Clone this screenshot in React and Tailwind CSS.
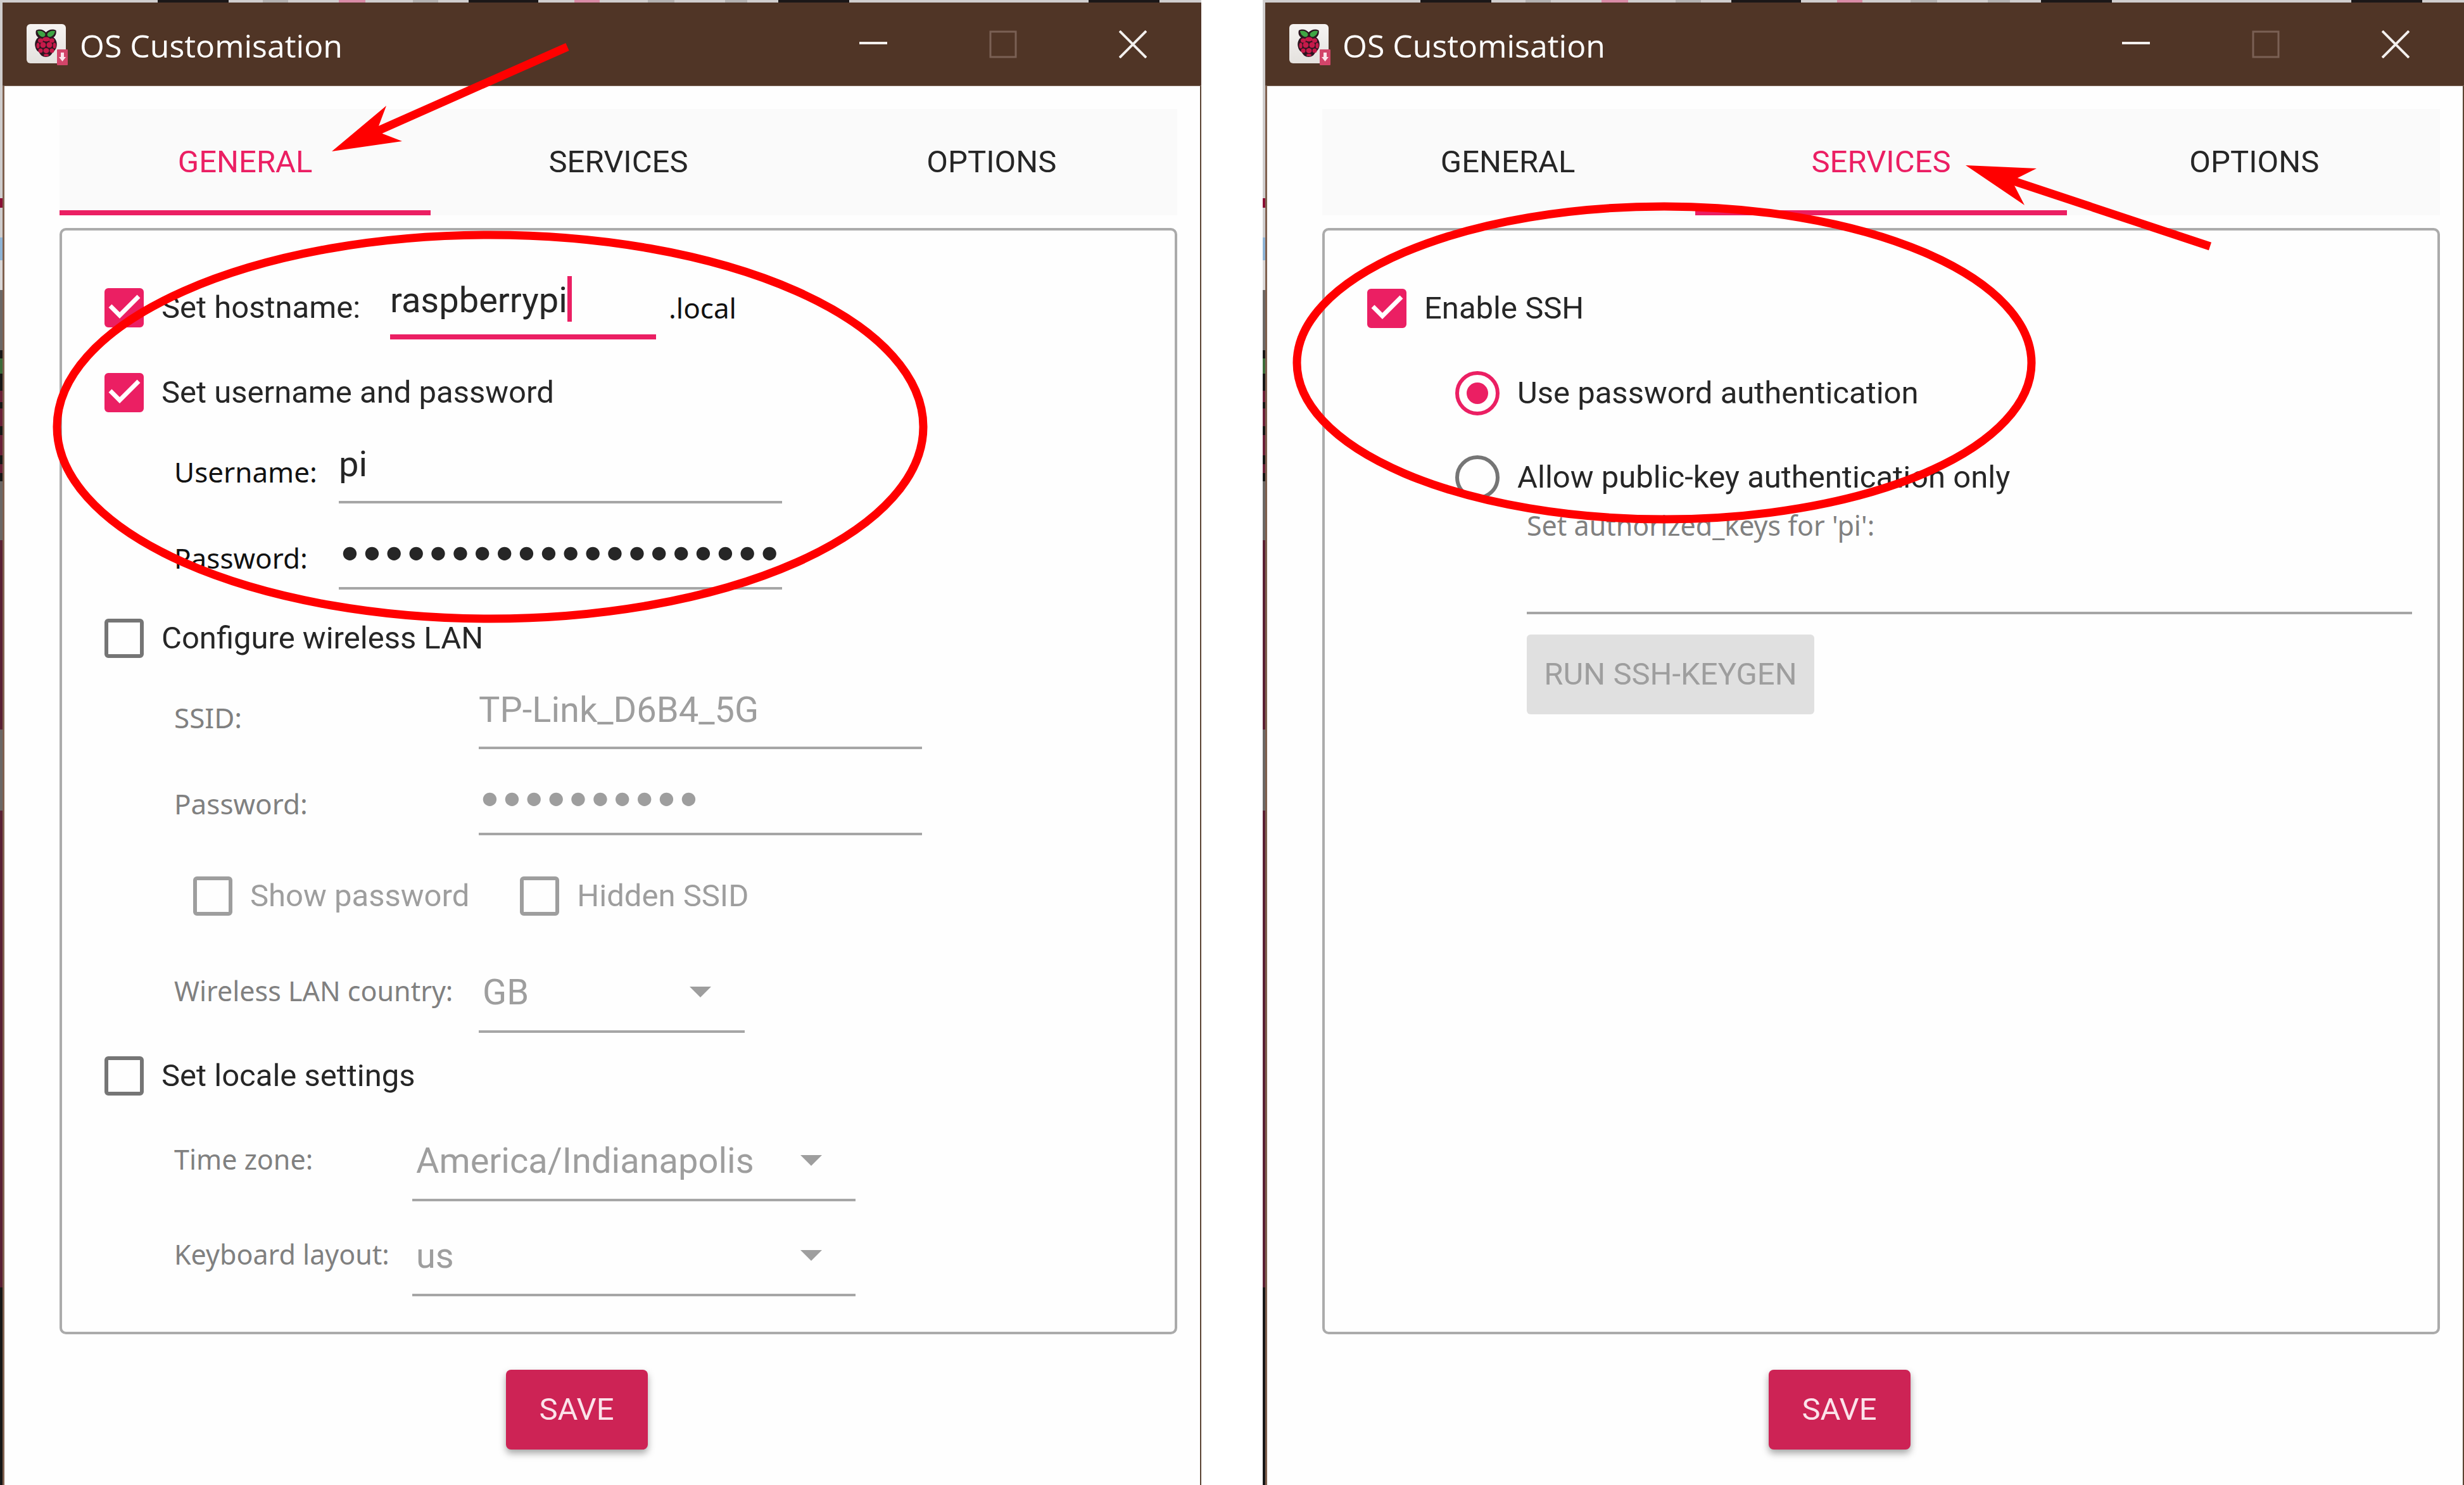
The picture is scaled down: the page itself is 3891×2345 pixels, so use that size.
import React from "react";

const ROBOTO = "font-['Roboto',sans-serif]";
const NOTO = "font-['Noto_Sans',sans-serif]";

/* Slices of the desktop that show along the left edge of each window: [height, colour]. */
const LEFT_EDGE = [
  [310, "#cfcdcd"], [15, "#8a0f35"], [47, "#cfcdcd"], [36, "#8fb4d6"], [47, "#d9d7d7"],
  [95, "#6b6765"], [13, "#171717"], [24, "#3b6b39"], [27, "#171717"], [18, "#6a2038"],
  [10, "#171717"], [28, "#6a2038"], [14, "#171717"], [32, "#6a2038"], [14, "#171717"],
  [14, "#6a2038"], [13, "#171717"], [93, "#6b6765"], [300, "#5a2034"], [128, "#6b6765"],
  [754, "#5a2034"], [313, "#171717"],
];

/* Slices along the top edge: [width, colour]. */
const TOP_EDGE = [
  [249, "#d0cece"], [112, "#1b1718"], [54, "#d0cece"], [40, "#b3b1b1"], [80, "#d0cece"],
  [42, "#d98ba6"], [75, "#d0cece"], [40, "#b3b1b1"], [48, "#d0cece"], [110, "#1b1718"],
  [57, "#d0cece"], [40, "#d98ba6"], [76, "#d0cece"], [42, "#b3b1b1"], [80, "#d0cece"],
  [35, "#b3b1b1"], [49, "#d0cece"], [112, "#1b1718"], [378, "#d0cece"], [112, "#1b1718"],
  [66, "#d0cece"],
];

function AppIcon() {
  return (
    <svg viewBox="0 0 66 66" className="size-[66px] shrink-0" aria-hidden="true">
      <defs>
        <linearGradient id="tile" x1="0" y1="0" x2="0" y2="1">
          <stop offset="0" stopColor="#f6f4f2" />
          <stop offset="1" stopColor="#e4e1de" />
        </linearGradient>
      </defs>
      <rect x="0" y="1" width="62" height="62" rx="6" fill="url(#tile)" />
      <path d="M15 11c6-3 12-1 15.500 3 4-4 10-6 16-3 1 5-1 9-4 11 4 3 6 8 5 14-1 5-4 8-6 9-2 5-6 8-11 8s-9-3-11-8c-3-1-5-4-6-9-1-6 1-11 5-14-3-2-5-6-3.500-11z" fill="#2c1620" />
      <path d="M17 12c6-1 11 1 12.500 5 0 4-3 5-6 4-4-2-6-5-6.500-9z" fill="#3fa544" />
      <path d="M45 12c-6-1-11 1-12.500 5 0 4 3 5 6 4 4-2 6-5 6.500-9z" fill="#3fa544" />
      <g fill="#c51a4a">
        <ellipse cx="31" cy="25" rx="6" ry="3.500" />
        <ellipse cx="22" cy="27" rx="4" ry="3.500" />
        <ellipse cx="40" cy="27" rx="4" ry="3.500" />
        <ellipse cx="18" cy="35" rx="2.500" ry="4.500" />
        <ellipse cx="44" cy="35" rx="2.500" ry="4.500" />
        <ellipse cx="26" cy="34" rx="4.500" ry="4.500" />
        <ellipse cx="36" cy="34" rx="4.500" ry="4.500" />
        <ellipse cx="22" cy="43" rx="3.500" ry="3.500" />
        <ellipse cx="40" cy="43" rx="3.500" ry="3.500" />
        <ellipse cx="31" cy="43" rx="4.500" ry="4" />
        <ellipse cx="31" cy="50" rx="4" ry="2" />
      </g>
      <rect x="48" y="41" width="17" height="25" rx="1" fill="#d2456a" />
      <path d="M54 46h5v7h3l-5.500 7-5.500-7h3z" fill="#fbe6ec" />
    </svg>
  );
}

function TitleBar() {
  const btn = "flex h-full w-[205px] items-center justify-center";
  return (
    <header className="flex h-[132px] items-center border-b border-[#7c6558] bg-[#503526] pr-1.5 pl-[38px]">
      <AppIcon />
      <h1 className="ml-[18px] flex-1 pt-1 font-['Open_Sans',sans-serif] text-[50px] leading-[60px] text-white">
        OS Customisation
      </h1>
      <button type="button" aria-label="Minimise" className={btn}>
        <svg viewBox="0 0 44 44" className="size-11"><path d="M0 20h44" stroke="#f3f0ee" strokeWidth="4" /></svg>
      </button>
      <button type="button" aria-label="Maximise" disabled className={btn}>
        <svg viewBox="0 0 44 44" className="size-11"><rect x="2" y="2" width="40" height="40" fill="none" stroke="#7a6054" strokeWidth="3" /></svg>
      </button>
      <button type="button" aria-label="Close" className={btn}>
        <svg viewBox="0 0 44 44" className="size-11"><path d="M1 1l42 42M43 1L1 43" stroke="#f3f0ee" strokeWidth="4" /></svg>
      </button>
    </header>
  );
}

function Tabs({ active }) {
  return (
    <div role="tablist" className="grid h-[168px] shrink-0 grid-cols-3 gap-[3px] bg-[#fafafa]">
      {["GENERAL", "SERVICES", "OPTIONS"].map((name) => (
        <button
          key={name}
          type="button"
          role="tab"
          aria-selected={name === active}
          className={`border-y-8 border-t-transparent text-[49px] leading-[60px] ${
            name === active ? "border-b-[#eb1f63] text-[#eb1f63]" : "border-b-transparent text-[#262626]"
          }`}
        >
          {name}
        </button>
      ))}
    </div>
  );
}

function Check({ id, label, checked = false, disabled = false }) {
  return (
    <div className="flex h-16 items-center gap-7">
      <span className="relative size-[62px] shrink-0">
        <input
          id={id}
          type="checkbox"
          defaultChecked={checked}
          disabled={disabled}
          className="block size-[62px] appearance-none rounded-[6px] border-[6px] border-[#757575] checked:border-[#eb1f63] checked:bg-[#eb1f63] disabled:border-[#9e9e9e]"
        />
        {checked && (
          <svg viewBox="0 0 62 62" className="pointer-events-none absolute inset-0 size-[62px]" aria-hidden="true">
            <path d="M9 28l15 15 30-30" fill="none" stroke="#fff" strokeWidth="7" />
          </svg>
        )}
      </span>
      <label htmlFor={id} className={`whitespace-nowrap text-[49px] leading-[60px] ${disabled ? "text-[#9e9e9e]" : "text-[#262626]"}`}>
        {label}
      </label>
    </div>
  );
}

function Radio({ id, label, checked = false }) {
  return (
    <div className="flex h-[72px] items-center gap-7">
      <input
        id={id}
        type="radio"
        name="ssh-auth"
        defaultChecked={checked}
        className="size-[70px] shrink-0 appearance-none rounded-full border-[6px] border-[#757575] bg-clip-content p-3 checked:border-[#eb1f63] checked:bg-[#eb1f63]"
      />
      <label htmlFor={id} className="whitespace-nowrap text-[49px] leading-[60px] text-[#262626]">{label}</label>
    </div>
  );
}

function Field({ id, label, value, labelWidth, password = false, disabled = false }) {
  return (
    <div className="flex h-[100px] items-center">
      <label htmlFor={id} className={`${NOTO} ${labelWidth} shrink-0 text-[44px] leading-[60px] ${disabled ? "text-[#808080]" : "text-[#111111]"}`}>
        {label}
      </label>
      <input
        id={id}
        type={password ? "password" : "text"}
        defaultValue={value}
        disabled={disabled}
        className={`h-full w-[700px] border-b-4 border-[#a6a6a6] outline-none ${
          password ? "pb-5 font-['Inter',sans-serif] text-[62px] [-webkit-text-stroke:2px]" : "pb-5 text-[56px]"
        } ${disabled ? "text-[#9e9e9e]" : "text-[#262626]"}`}
      />
    </div>
  );
}

function Select({ id, label, value, labelWidth, width }) {
  return (
    <div className="flex h-[100px]">
      <label htmlFor={id} className={`${NOTO} ${labelWidth} shrink-0 text-[43px] leading-[68px] text-[#808080]`}>
        {label}
      </label>
      <div className={`relative h-full ${width}`}>
        <select
          id={id}
          disabled
          defaultValue={value}
          className="h-full w-full appearance-none border-b-4 border-[#a6a6a6] pb-6 pl-1.5 text-[56px] leading-[66px] text-[#9e9e9e] disabled:opacity-100"
        >
          <option>{value}</option>
        </select>
        <svg viewBox="0 0 34 17" className="pointer-events-none absolute top-[27px] right-[53px] h-[17px] w-[34px]" aria-hidden="true">
          <path d="M0 0h34L17 17z" fill="#9e9e9e" />
        </svg>
      </div>
    </div>
  );
}

function GeneralForm() {
  return (
    <form className="flex flex-col pt-[72px] pb-14 pl-[67px]">
      <div className="flex h-[100px] items-center">
        <div className="w-[451px]">
          <Check id="set-hostname" label="Set hostname:" checked />
        </div>
        <div className="relative h-full w-[420px]">
          <input
            type="text"
            aria-label="Hostname"
            defaultValue="raspberrypi"
            className="h-full w-full border-b-8 border-[#eb1f63] pb-4 text-[56px] text-[#262626] outline-none"
          />
          <span className="absolute top-0 left-[280px] h-[72px] w-[7px] bg-[#eb1f63]" />
        </div>
        <span className={`${NOTO} ml-5 text-[44px] leading-[60px] text-[#111111]`}>.local</span>
      </div>

      <div className="mt-[52px]">
        <Check id="set-user" label="Set username and password" checked />
      </div>
      <div className="mt-[43px] flex flex-col gap-9 pl-[110px]">
        <Field id="username" label="Username:" value="pi" labelWidth="w-[260px]" />
        <Field id="password" label="Password:" value="raspberrypi-password" labelWidth="w-[260px]" password />
      </div>

      <div className="mt-[45px]">
        <Check id="set-wifi" label="Configure wireless LAN" />
      </div>
      <div className="mt-[43px] flex flex-col pl-[110px]">
        <Field id="ssid" label="SSID:" value="TP-Link_D6B4_5G" labelWidth="w-[481px]" disabled />
        <div className="mt-9">
          <Field id="wifi-password" label="Password:" value="wifisecret" labelWidth="w-[481px]" password disabled />
        </div>
        <div className="mt-16 flex gap-20 pl-[30px]">
          <Check id="show-password" label="Show password" disabled />
          <Check id="hidden-ssid" label="Hidden SSID" disabled />
        </div>
        <div className="mt-[84px]">
          <Select id="wifi-country" label="Wireless LAN country:" value="GB" labelWidth="w-[481px]" width="w-[420px]" />
        </div>
      </div>

      <div className="mt-9">
        <Check id="set-locale" label="Set locale settings" />
      </div>
      <div className="mt-[66px] flex flex-col gap-[50px] pl-[110px]">
        <Select id="timezone" label="Time zone:" value="America/Indianapolis" labelWidth="w-[376px]" width="w-[700px]" />
        <Select id="keyboard" label="Keyboard layout:" value="us" labelWidth="w-[376px]" width="w-[700px]" />
      </div>
    </form>
  );
}

function ServicesForm() {
  return (
    <form className="flex flex-col pt-[91px] pr-10 pl-[67px]">
      <Check id="enable-ssh" label="Enable SSH" checked />
      <div className="mt-[66px] flex flex-col gap-[61px] pl-[139px]">
        <Radio id="ssh-password" label="Use password authentication" checked />
        <Radio id="ssh-key" label="Allow public-key authentication only" />
      </div>
      <div className="mt-2.5 flex flex-col items-start pl-[252px]">
        <label htmlFor="authorized-keys" className={`${NOTO} text-[43px] leading-[60px] text-[#808080]`}>
          Set authorized_keys for 'pi':
        </label>
        <textarea id="authorized-keys" disabled className="block h-[110px] w-full resize-none border-b-4 border-[#a6a6a6]" />
        <button type="button" disabled className="mt-8 h-[126px] w-[454px] rounded-[6px] bg-[#e0e0e0] text-[49px] leading-[60px] text-[#9e9e9e]">
          RUN SSH-KEYGEN
        </button>
      </div>
    </form>
  );
}

function Dialog({ active, children }) {
  return (
    <section className="flex min-w-0 flex-col">
      <div className="flex h-1 overflow-hidden">
        {TOP_EDGE.map(([w, c], i) => (
          <span key={i} style={{ flexGrow: w, backgroundColor: c }} />
        ))}
      </div>
      <div className="flex flex-1">
        <div className="flex w-1 shrink-0 flex-col">
          {LEFT_EDGE.map(([h, c], i) => (
            <span key={i} style={{ flexGrow: h, backgroundColor: c }} />
          ))}
        </div>
        <div className="flex min-w-0 flex-1 flex-col">
          <TitleBar />
          <main className="flex flex-1 flex-col border-r-2 border-l-3 border-r-[#5b4433] border-l-[#80614f] bg-[#fefefe] pt-9 pr-9 pb-14 pl-[87px]">
            <Tabs active={active} />
            <div className="mt-5 flex-1 rounded-[10px] border-4 border-[#ababab]">{children}</div>
            <div className="mt-14 flex justify-center pr-[132px]">
              <button type="button" className="h-[126px] w-[224px] rounded-[8px] bg-[#cd2355] text-[49px] leading-[60px] text-[#fbe3ea] shadow-[0_6px_12px_rgba(0,0,0,0.35)]">
                SAVE
              </button>
            </div>
          </main>
        </div>
      </div>
    </section>
  );
}

/* Hand-drawn red marks over both dialogs. */
function Annotations() {
  return (
    <svg viewBox="0 0 3891 2345" className="pointer-events-none absolute top-0 left-0 w-full" aria-hidden="true">
      <g fill="none" stroke="#ff0000" strokeWidth="13">
        <ellipse cx="774" cy="674" rx="684" ry="303" />
        <ellipse cx="2628" cy="573" rx="580" ry="247" />
        <path d="M896 74L598 206M3490 389L3180 286" />
      </g>
      <g fill="#ff0000">
        <path d="M524 239L610 167L598 199L604 211L635 223Z" />
        <path d="M3104 261L3216 266L3186 281L3181 293L3197 324Z" />
      </g>
    </svg>
  );
}

export default function App() {
  return (
    <div className={`${ROBOTO} relative grid min-h-screen grid-cols-2 gap-[97px] bg-white`}>
      <Dialog active="GENERAL">
        <GeneralForm />
      </Dialog>
      <Dialog active="SERVICES">
        <ServicesForm />
      </Dialog>
      <Annotations />
    </div>
  );
}
